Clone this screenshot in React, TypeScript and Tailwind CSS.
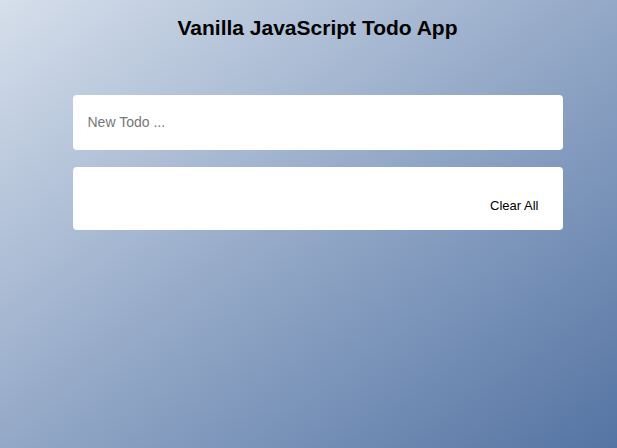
export default function App() {
  return (
    <div
      className="flex h-[448px] w-full flex-col items-center bg-gradient-to-br from-[#d6dfeb] to-[#5574a3] pl-[18px] text-black"
      style={{ fontFamily: '"Liberation Sans", Arial, sans-serif' }}
    >
      <h1 className="mt-[14px] text-[21px] font-bold leading-[27px]">Vanilla JavaScript Todo App</h1>

      <div className="mt-[54px] flex w-[490px] flex-col gap-[17px]">
        <div className="flex h-[55px] items-center rounded-[4px] bg-white px-[15px]">
          <input
            type="text"
            placeholder="New Todo ..."
            className="w-full bg-transparent text-[14px] text-gray-800 outline-none placeholder:text-[#777]"
          />
        </div>

        <div className="flex h-[63px] items-end justify-end rounded-[4px] bg-white pb-[17px] pr-[24px]">
          <button className="text-[13px] leading-[15px] text-black">Clear All</button>
        </div>
      </div>
    </div>
  );
}
